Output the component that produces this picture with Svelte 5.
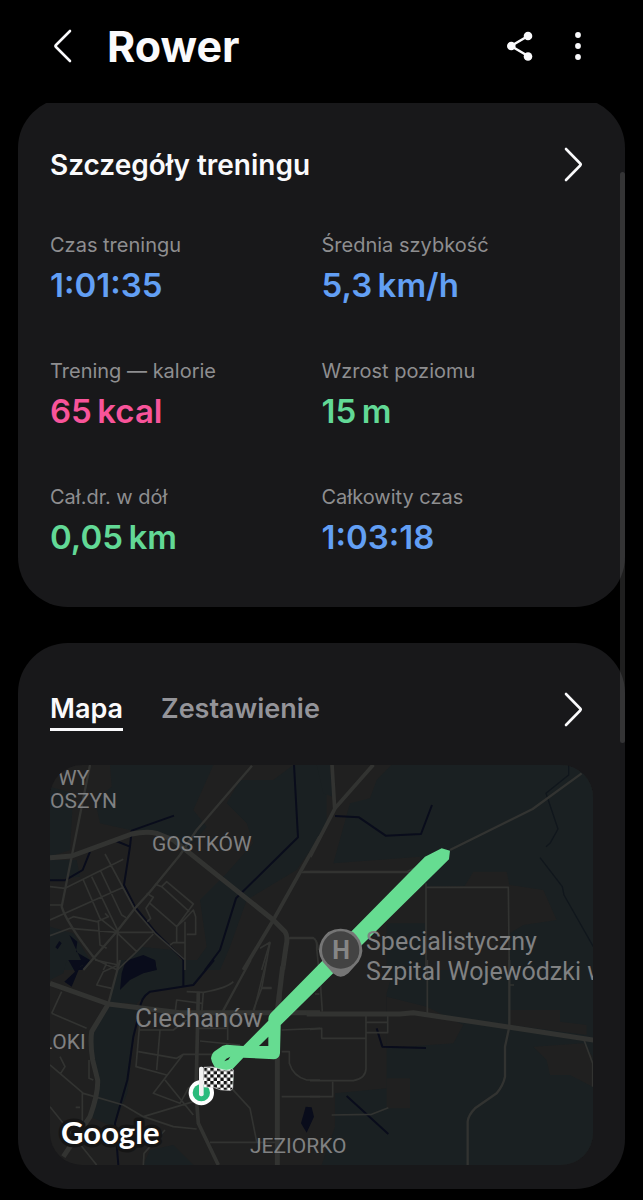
<script>
    let activeTab = $state("map");

    const stats = [
        { label: "Czas treningu", value: "1:01:35", tone: "blue" },
        { label: "Średnia szybkość", value: "5,3\u2009km/h", tone: "blue" },
        { label: "Trening — kalorie", value: "65\u2009kcal", tone: "pink" },
        { label: "Wzrost poziomu", value: "15\u2009m", tone: "green" },
        { label: "Cał.dr. w dół", value: "0,05\u2009km", tone: "green" },
        { label: "Całkowity czas", value: "1:03:18", tone: "blue" },
    ];

    const tabs = [
        { id: "map", name: "Mapa" },
        { id: "summary", name: "Zestawienie" },
    ];

    // Map tiles, each with its own origin; drawn layer by layer
    const tiles = [
        {
            origin: "-30 -15",
            fields: "M210 15H520L460 150L500 200L440 270L340 215L270 210L180 190L165 120L215 80ZM30 80L100 100L90 270L30 290ZM30 300H110L120 350L30 360ZM600 60H700L760 15H860V200L770 330L620 420L570 560L540 630H450L500 560L480 420L560 340L640 250L620 190L560 130ZM30 500L100 520L150 600L130 630H30ZM240 630L300 560L400 570L440 630Z",
            patches: "",
            lakes: "M88 525L112 545L108 575L150 600L130 630H105L130 615ZM46 562L58 543L65 550L53 568ZM258 630L265 600L310 585L345 600L350 630Z",
            rivers: "M762 14L774 232L588 415L540 570L495 630M402 167L275 212L270 260L252 375L285 440L345 515L432 600M228 243L270 260M30 361H75L128 330L150 275",
            creeks: "",
            main: "M30 293L95 288L275 222Q320 213 350 220L400 240L450 280L700 480L735 515Q745 530 738 560L728 630",
            roads: "M840 230L700 480L610 630",
            streets: "M636 17L470 210L420 285L330 395L285 445L230 515L130 630M150 15L95 290L65 440Q80 490 165 597",
            lanes: "M30 380L75 385L250 298M195 282L285 450L345 520L435 600V630M30 435H65M30 480L250 382M30 527L90 505L230 517H340M130 360L180 475L230 515M155 350L235 515M182 333L245 465L258 473M80 480L100 470L170 485L205 470L195 460M175 485L180 555L200 565M232 517V630M230 517L290 575L232 630M340 522L290 575M345 372L365 380L380 365L460 432L410 500L330 430M365 380L448 455M320 400L340 412L318 445L332 475L322 485M435 485V600M410 500L432 480L460 450L467 470V523H440M410 500V548M390 555L400 548H435M790 335H840M660 565L690 547L665 630M748 533H820Q832 540 835 570M165 597L232 630M190 630L200 610",
        },
        {
            origin: "780 -15",
            fields: "M245 14L200 60L180 115L120 130L70 310L330 290L345 380L600 375L700 390L740 480L640 495L600 520V640H850V14ZM20 14H60L68 110L40 100ZM230 490H345V640H230Z",
            patches: "M490 335H590L600 385H460Z",
            lakes: "",
            rivers: "M75 168L147 172L227 227L333 222L366 135",
            creeks: "M776 14V45L708 100L744 207L720 250L708 260M690 293L757 380L762 405L850 560",
            main: "",
            roads: "M66 14L74 145M190 14L75 145L0 290",
            streets: "M815 40L668 147L420 270",
            lanes: "M0 335H290L345 310M348 370V640M348 382H595L598 640",
        },
        {
            origin: "-30 585",
            fields: "M205 140L290 130L280 230L262 400L220 500L150 470L175 380L150 230ZM240 0H520L460 75L330 95L290 130H205ZM310 615L330 570L400 555L460 615ZM30 0H80L70 40L30 60Z",
            patches: "",
            lakes: "M85 0H148L120 20L95 80L73 65L105 35ZM258 0H345L350 30L310 40L270 60L240 90L245 40ZM797 440L815 442L822 470L800 518L783 490Z",
            rivers: "M522 0L460 75L330 95Q300 115 300 150L280 230L262 360L225 490L235 615M430 0V78",
            creeks: "",
            main: "M30 70L205 132L420 158H840M205 132L155 215Q150 250 158 300L173 360Q175 400 150 470L70 590M718 100L712 270V615",
            roads: "M475 95L468 400L475 490L535 615",
            streets: "M240 0L205 132M632 0L545 160",
            lanes: "M65 95L35 160M35 160L140 205M215 85L170 75L190 35L235 15L165 0M30 315L130 400L250 435L310 470L400 500L470 507M127 400V500M30 440L170 615M147 300V355L160 360M60 290L75 320L62 340M107 442H120M300 180L288 320L380 345M300 210H400L440 180M295 275L410 295L430 283H530M360 210L350 330M430 283L340 400L420 430L445 385L470 370M310 470L460 425L470 400M375 360L460 465M310 615L312 580L375 510M440 95L490 97L485 160M490 97Q560 85 580 65M405 160L410 120L485 130M680 0L640 160M665 83H695M480 243L600 255M563 160V240M475 205H560M570 380L630 445L650 545M510 547H715M725 210L840 205M725 275H748V310Q760 350 800 360H840M725 410H840",
        },
        {
            origin: "780 585",
            fields: "M250 30H850V615H35L75 500V400L230 385V100Z",
            patches: "M230 110L350 140L460 195L430 250L230 265ZM600 150H750V185L830 195V225L600 195ZM670 260L820 250L848 290V380L780 345H720L710 300ZM230 355H300V445H230Z",
            lakes: "",
            rivers: "M200 205L217 260L348 264M110 408L235 522",
            creeks: "",
            main: "M-10 162H270L310 158L350 164L600 202L850 240",
            roads: "",
            streets: "M598 0V200L585 260V350Q580 375 560 400L495 445Q475 465 473 485V615",
            lanes: "M352 0V160M168 160V325Q168 355 130 362H0M168 187H233M233 165V218H168M168 235H35V205L0 208M68 365V410H0M65 465L185 463L235 443M822 240L848 310V380M600 75H612",
        },
        {
            origin: "540 285",
            fields: "",
            patches: "",
            lakes: "",
            rivers: "",
            creeks: "",
            main: "M158 320L140 470",
            roads: "",
            streets: "",
            lanes: "M215 37H560M175 235H250Q262 240 260 265L272 380L277 455M255 402H268M120 248L95 385L70 450M97 385H125",
        },
    ];

    const labels = [
        { text: "WY", x: 8, y: 20, size: 21 },
        { text: "OSZYN", x: 0, y: 43, size: 21 },
        { text: "GOSTKÓW", x: 102, y: 86, size: 21 },
        { text: "Specjalistyczny", x: 316, y: 185, size: 25 },
        { text: "Szpital Wojewódzki w", x: 316, y: 215, size: 25 },
        { text: "Ciechanów", x: 85, y: 262, size: 26 },
        { text: "ŁOKI", x: -9, y: 284, size: 21 },
        { text: "JEZIORKO", x: 200, y: 388, size: 21 },
    ];
</script>

<header>
    <button class="icon-btn" aria-label="Wstecz">
        <svg width="40" height="56" viewBox="0 0 40 56">
            <path class="line" d="M27 13L13 27Q12 28 13 29L27 43" />
        </svg>
    </button>
    <h1>Rower</h1>
    <div class="actions">
        <button class="icon-btn" aria-label="Udostępnij">
            <svg width="40" height="56" viewBox="0 0 40 56">
                <path class="line" d="M28 18L11 28L28 38" />
                <circle cx="28" cy="18" r="4.3" />
                <circle cx="11.3" cy="28" r="4.3" />
                <circle cx="28" cy="38.5" r="4.3" />
            </svg>
        </button>
        <button class="icon-btn" aria-label="Więcej opcji">
            <svg width="40" height="56" viewBox="0 0 40 56">
                <circle cx="20" cy="17" r="2.9" />
                <circle cx="20" cy="28" r="2.9" />
                <circle cx="20" cy="39" r="2.9" />
            </svg>
        </button>
    </div>
</header>

{#snippet more(name)}
    <button class="icon-btn" aria-label={name}>
        <svg width="40" height="40" viewBox="0 0 40 40">
            <path class="line" d="M13 4L27.2 18.5Q28.2 19.5 27.2 20.5L13 35" />
        </svg>
    </button>
{/snippet}

<main>
    <section class="card">
        <div class="card-head">
            <h2>Szczegóły treningu</h2>
            {@render more("Pokaż szczegóły")}
        </div>
        <dl>
            {#each stats as stat}
                <div>
                    <dt>{stat.label}</dt>
                    <dd class={stat.tone}>{stat.value}</dd>
                </div>
            {/each}
        </dl>
    </section>

    <section class="card map-card">
        <div class="card-head">
            <div class="tabs">
                {#each tabs as tab}
                    <button
                        class="tab"
                        class:active={activeTab === tab.id}
                        onclick={() => (activeTab = tab.id)}>{tab.name}</button
                    >
                {/each}
            </div>
            {@render more("Otwórz mapę")}
        </div>
        <svg class="map" viewBox="0 0 543 400">
            <defs>
                <pattern id="checks" width="20" height="20" patternUnits="userSpaceOnUse" x="461" y="908">
                    <rect width="20" height="20" fill="#fff" />
                    <path d="M0 0H10V10H0ZM10 10H20V20H10Z" fill="#111" />
                </pattern>
            </defs>
            <g transform="scale(0.33333)">
                {#each ["fields", "patches", "lakes", "creeks", "rivers", "lanes", "streets", "roads", "main"] as layer}
                    {#each tiles as tile}
                        <path class={layer} transform="translate({tile.origin})" d={tile[layer]} />
                    {/each}
                {/each}
                <path
                    class="route"
                    d="M1125 275L1175 250L1200 257L1197 283L692 780L690 865Q688 882 672 883L580 878L545 915L550 940L548 962L520 940Q485 900 483 880Q485 865 495 858L518 842L530 839L580 843L655 767Q654 755 662 745ZM655 815L627 843H655ZM523 889L529 881L541 875L535 884Z"
                />
                <path class="pin" d="M872 491A64 64 0 0 1 926 590L895 625Q872 645 849 625L818 590A64 64 0 0 1 872 491Z" />
                <circle class="pin-face" cx="872" cy="555" r="56" />
                <circle cx="454" cy="983" r="38" />
                <circle class="start" cx="454" cy="983" r="26" />
                <path class="flag" d="M462 907Q485 902 510 912Q530 920 545 912Q552 912 550 922L548 970Q546 978 535 976Q510 977 490 967L462 966Z" />
                <rect class="pole" x="447" y="905" width="14" height="89" rx="6" />
            </g>
            <text class="pin-letter" x="291" y="194">H</text>
            {#each labels as label}
                <text class="place" x={label.x} y={label.y} font-size={label.size}>{label.text}</text>
            {/each}
            <text class="brand" x="11" y="379">Google</text>
        </svg>
    </section>
    <div class="scrollbar"></div>
</main>

<style>
    :global(body) {
        background-color: #000;
        color: #fafafc;
        font-family: Inter, "Liberation Sans", sans-serif;
    }

    header {
        display: flex;
        align-items: center;
        padding: 18px 45px 29px 43px;
    }

    h1 {
        margin: 0 0 0 24px;
        font-size: 43px;
        line-height: 56px;
        font-weight: 700;
    }

    .actions {
        display: flex;
        gap: 18px;
        margin-left: auto;
    }

    button {
        padding: 0;
        border: none;
        background: none;
        color: inherit;
        font-family: inherit;
        cursor: pointer;
    }

    .icon-btn svg {
        display: block;
        fill: #fafafc;
    }

    .line {
        fill: none;
        stroke: #fafafc;
        stroke-width: 2.6;
        stroke-linecap: round;
        stroke-linejoin: round;
    }

    main {
        position: relative;
        overflow: hidden;
    }

    .card {
        margin: -5px 18px 36px;
        padding: 47px 32px 44px;
        border-radius: 50px;
        background-color: #18181a;
    }

    .map-card {
        margin: 0 18px 11px;
        padding-bottom: 24px;
    }

    .card-head {
        display: flex;
        align-items: center;
        justify-content: space-between;
        height: 40px;
    }

    h2,
    .tab {
        margin: 0;
        font-size: 27px;
        line-height: 40px;
        font-weight: 600;
    }

    h2 {
        font-size: 28px;
    }

    dl {
        display: grid;
        grid-template-columns: 1fr 1fr;
        row-gap: 46px;
        margin: 46px 0 0;
    }

    dt {
        font-size: 20px;
        line-height: 28px;
        color: #8e8e90;
    }

    dd {
        margin: 0;
        font-size: 33px;
        line-height: 52px;
        font-weight: 600;
    }

    .blue {
        color: #629ff4;
    }

    .pink {
        color: #f8549a;
    }

    .green {
        color: #62d996;
    }

    .tabs {
        display: flex;
        gap: 38px;
    }

    .tab {
        border-bottom: 3px solid transparent;
        line-height: 38px;
        color: #949499;
    }

    .tab.active {
        border-color: #fafafc;
        color: #fafafc;
    }

    .map {
        display: block;
        width: 100%;
        margin-top: 35px;
        border-radius: 32px;
        background-color: #202020;
        font-family: Roboto, sans-serif;
        fill: #fff;
    }

    .fields {
        fill: #1a2022;
    }

    .patches {
        fill: #202020;
    }

    .lakes {
        fill: #090c1b;
    }

    .rivers,
    .creeks,
    .main,
    .roads,
    .streets,
    .lanes {
        fill: none;
        stroke: #323331;
        stroke-linejoin: round;
    }

    .rivers {
        stroke: #090c1b;
        stroke-width: 6;
    }

    .creeks {
        stroke: #10161c;
        stroke-width: 4;
    }

    .main {
        stroke-width: 15;
    }

    .roads {
        stroke-width: 11;
    }

    .streets {
        stroke-width: 7;
    }

    .lanes {
        stroke-width: 5;
    }

    .route {
        fill: #66dc91;
        fill-rule: evenodd;
    }

    .pin {
        fill: #757575;
    }

    .pin-face {
        fill: #434343;
    }

    .pin-letter {
        fill: #868686;
        font-size: 25px;
        font-weight: 700;
        text-anchor: middle;
    }

    .start {
        fill: #2bbb7c;
    }

    .flag {
        fill: url(#checks);
        stroke: #e8e8e8;
        stroke-width: 2;
    }

    .pole {
        fill: #f0f0f0;
    }

    .place {
        fill: #808182;
    }

    .brand {
        font-family: Lato, sans-serif;
        font-size: 31px;
        font-weight: 700;
        stroke: #151515;
        stroke-width: 7px;
        stroke-linejoin: round;
        paint-order: stroke;
    }

    .scrollbar {
        position: absolute;
        top: 69px;
        right: 18px;
        width: 5px;
        height: 571px;
        border-radius: 3px;
        background-color: rgba(255, 255, 255, 0.12);
    }
</style>
